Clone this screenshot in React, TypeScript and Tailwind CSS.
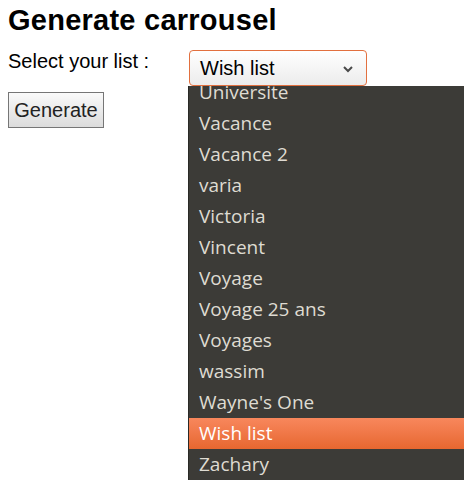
const items = [
  'Universite',
  'Vacance',
  'Vacance 2',
  'varia',
  'Victoria',
  'Vincent',
  'Voyage',
  'Voyage 25 ans',
  'Voyages',
  'wassim',
  "Wayne's One",
  'Wish list',
  'Zachary',
];

export default function App() {
  const selected = 'Wish list';

  return (
    <div className="relative h-[480px] w-[464px] overflow-hidden bg-white px-2 font-['Liberation_Sans',Arial,sans-serif] text-black">
      <h1 className="pt-[5px] text-[29px] font-bold leading-[31px] tracking-[0.25px]">Generate carrousel</h1>

      <div className="mt-[14px] flex items-start">
        <label className="w-[181px] text-[20px] leading-[23px]">Select your list :</label>
        <div className="flex h-[36px] w-[178px] items-center justify-between rounded-[4px] border border-[#e2703f] bg-gradient-to-b from-white to-[#ececec] pl-[10px] pr-[12px]">
          <span className="text-[20px] leading-none">Wish list</span>
          <svg width="12" height="8" viewBox="0 0 12 8" className="mt-[1px]">
            <path d="M2 2l4 4 4-4" fill="none" stroke="#4a4a4a" strokeWidth="2" />
          </svg>
        </div>
      </div>

      <button className="mt-[6px] h-[36px] w-[96px] border border-[#767676] bg-gradient-to-b from-[#fafafa] to-[#dcdcdc] text-center text-[20px] leading-none text-[#222]">
        Generate
      </button>

      <div className="absolute left-[188px] right-0 top-[86px] h-[394px] overflow-hidden border-l border-[#2a2926] bg-[#3c3b37] font-['Open_Sans','Noto_Sans',sans-serif] text-[19px] text-[#dfdbd2]">
        <ul className="-mt-[9px]">
          {items.map((it) => (
            <li
              key={it}
              className={
                it === selected
                  ? 'flex h-[31px] items-center bg-gradient-to-b from-[#f8875c] to-[#e7672f] pl-[10px] text-white'
                  : 'flex h-[31px] items-center pl-[10px]'
              }
            >
              {it}
            </li>
          ))}
        </ul>
      </div>
    </div>
  );
}
